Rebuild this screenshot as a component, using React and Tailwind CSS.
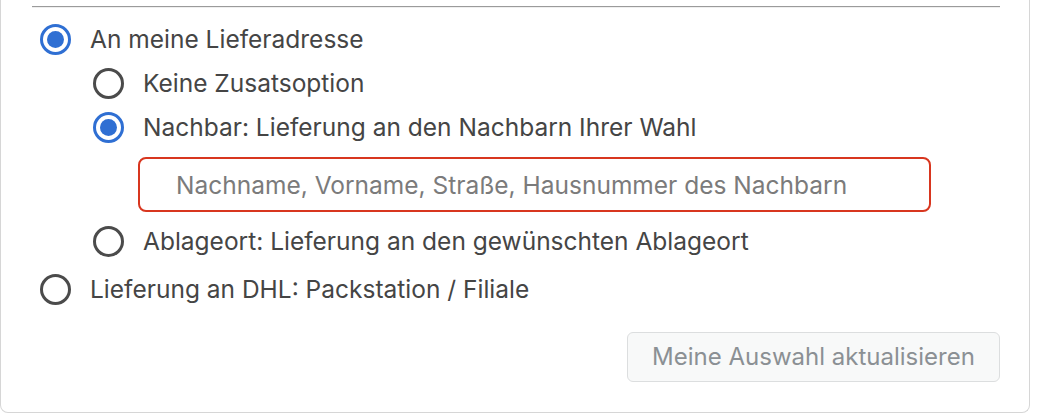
const font = { fontFamily: "Inter, 'Noto Sans', sans-serif" };

function Radio({ checked }) {
  return checked ? (
    <span className="flex h-[31px] w-[31px] shrink-0 items-center justify-center rounded-full border-[3px] border-[#2f6fd3]">
      <span className="h-[17px] w-[17px] rounded-full bg-[#2f6fd3]" />
    </span>
  ) : (
    <span className="h-[31px] w-[31px] shrink-0 rounded-full border-[3px] border-[#4b4b4b]" />
  );
}

function Option({ checked, label, nested, className = "" }) {
  return (
    <label
      className={`flex h-[44px] items-center gap-[19px] ${
        nested ? "ml-[61px]" : "ml-[8px]"
      } ${className}`}
    >
      <Radio checked={checked} />
      <span className="text-[24.5px] leading-none text-[#454545]">{label}</span>
    </label>
  );
}

export default function App() {
  return (
    <div className="h-[416px] w-[1042px] overflow-hidden bg-white" style={font}>
      <div className="w-[1030px] rounded-b-lg border-x border-b border-[#d6d6d6] pb-[30px] pl-[31px] pr-[29px] pt-[6px]">
        <div className="h-[2px] border-t border-[#9b9b9b] bg-[#efefef]" />
        <div className="mt-[9px]">
          <Option checked label="An meine Lieferadresse" />
          <Option nested label="Keine Zusatsoption" />
          <Option nested checked label="Nachbar: Lieferung an den Nachbarn Ihrer Wahl" />
          <div className="ml-[106px] mt-[8px] w-[793px]">
            <input
              type="text"
              placeholder="Nachname, Vorname, Straße, Hausnummer des Nachbarn"
              className="h-[55px] w-full rounded-lg border-2 border-[#d8361f] bg-white pl-[36px] text-[24.5px] text-[#454545] outline-none placeholder:text-[#7b7b7b]"
            />
          </div>
          <Option nested className="mt-[7px]" label="Ablageort: Lieferung an den gewünschten Ablageort" />
          <Option className="mt-[4px]" label="Lieferung an DHL: Packstation / Filiale" />
        </div>
        <div className="mt-[21px] flex justify-end">
          <button
            type="button"
            className="h-[50px] w-[373px] rounded-md border border-[#dcdedf] bg-[#f8f9f9] text-[24px] text-[#8b9094]"
          >
            Meine Auswahl aktualisieren
          </button>
        </div>
      </div>
    </div>
  );
}
